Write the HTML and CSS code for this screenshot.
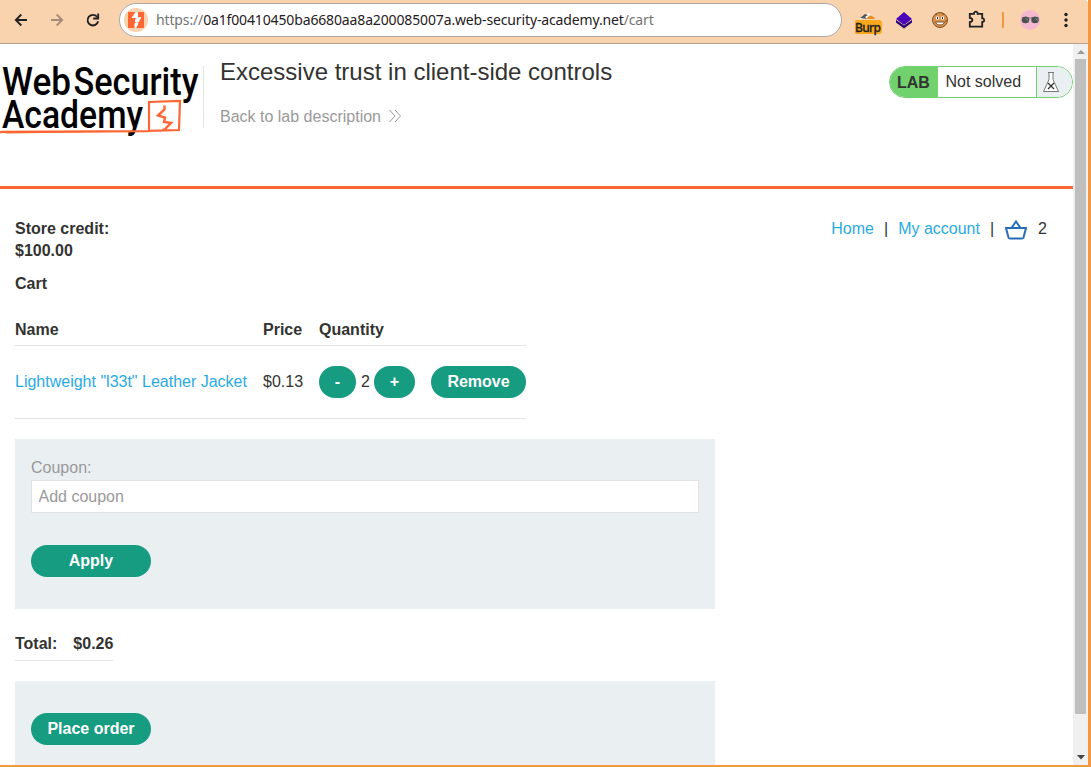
FILE: index.html
```
<!DOCTYPE html>
<html lang="en">
<head>
<meta charset="utf-8">
<title>Excessive trust in client-side controls</title>
<link rel="stylesheet" href="styles.css">
</head>
<body>
<div class="window">
  <header class="toolbar">
    <svg class="nav-icons" width="120" height="43" viewBox="0 0 120 43" fill="none" stroke="#1f2023" stroke-width="1.8">
      <path d="M27 20H16M21.3 14.5L15.8 20l5.500 5.500"/>
      <path d="M51 20h11M56.700 14.500l5.500 5.500-5.500 5.500" stroke="#a38b79"/>
      <path d="M97.300 17.200A5.300 5.300 0 1 0 98.100 21.200"/>
      <path d="M98.200 13.500v5h-5"/>
    </svg>
    <div class="address">
      <svg width="24" height="24" viewBox="0 0 24 24"><circle cx="12" cy="12" r="12" fill="#f9d2ae"/><path fill="#ff6633" d="M4 4h16v16H4z"/><path fill="#fff" d="M11.500 4H14v5.200h3.500l-3 5h-1.200l1.200 1.500-2.500 4.300h-1.500v-4.500l2-1.500H11v-2.500l1.500-1.500H7.500z"/></svg>
      <span class="url">https://<b>0a1f00410450ba6680aa8a200085007a.web-security-academy.net</b>/cart</span>
    </div>
    <div class="extensions">
      <svg width="233" height="43" viewBox="0 0 233 43">
        <path d="M5 18c2-2 3-3 5-3l4-2 2 2 3 2 1 2H5z" fill="#fff"/><path d="M5 18l5-4 3 1-3 2 2 2z" fill="#555"/><path d="M12 18l3-3 4 2 1 2h-9z" fill="#ee8d24"/>
        <rect x="-1" y="20" width="28" height="14" rx="3" fill="#fda81e"/>
        <text x="0" y="32" class="badge" textLength="26">Burp</text>
        <path fill="#26006f" d="M41 20l8 5.500 8-5.500v2.500L49 28.500l-8-6z"/><path fill="#4b05b8" d="M49 12l8 7-8 6-8-6z"/>
        <circle cx="85" cy="20" r="7.500" fill="#d9934b" stroke="#81502d"/><g fill="#874a20"><circle cx="81" cy="14.500" r=".8"/><circle cx="88" cy="14" r=".8"/><circle cx="91" cy="21" r=".8"/></g><g fill="#fff"><circle cx="82.500" cy="18" r="1.700"/><circle cx="87.500" cy="18" r="1.700"/><path d="M80.500 22h9c-1 4-8 4-9 0z" stroke="#633315" stroke-width=".8"/></g><path d="M82.500 17v2M87.500 17v2" stroke="#222"/>
        <path d="M114.800 13.800h4.200v-1a2 2 0 0 1 3.600 0v1h4.600v4.600h.7a1.900 1.900 0 0 1 0 3.600h-.7v4.700h-12.400v-4.600c3.400-.3 3.400-3.900 0-4.200z" fill="none" stroke="#202124" stroke-width="1.800"/>
        <path d="M147 12h2v16h-2z" fill="#f49740"/>
        <circle cx="175" cy="20" r="10" fill="#f5b8ce"/><path d="M167 18q4-2 7 0h2q4-2 8 0" fill="none" stroke="#777"/><ellipse cx="170.500" cy="20" rx="3.800" ry="3.300" fill="#4b5150"/><ellipse cx="180" cy="20" rx="3.800" ry="3.300" fill="#4b5150"/><path d="M171 18.500l2 2M181 18.500l1.500 2" stroke="#9fa9a5"/>
        <g fill="#202124"><circle cx="211" cy="14.500" r="1.700"/><circle cx="211" cy="20" r="1.700"/><circle cx="211" cy="25.500" r="1.700"/></g>
      </svg>
    </div>
  </header>
  <div class="viewport">
    <main class="page">
      <section class="lab-header">
        <svg class="logo" width="204" height="96" viewBox="0 44 204 96">
          <g class="logo-text">
            <text x="2" y="95" textLength="69" lengthAdjust="spacingAndGlyphs">Web</text>
            <text x="73.500" y="95" textLength="125" lengthAdjust="spacingAndGlyphs">Security</text>
            <text x="2" y="127.500" textLength="141" lengthAdjust="spacingAndGlyphs">Academy</text>
          </g>
          <path d="M0 132.300l2-.4 146-.7M149 131V102l31-1-1 29-31 .8" fill="none" stroke="#ff6633" stroke-width="2.200"/>
          <path d="M0 132.500l60-.9 66 .1-118 1.900z" fill="#ff6633"/>
          <path d="M164.500 105.500v4l-6.500 6 7 2-1 4.500 7 .8-6.500 7h-2" fill="none" stroke="#ff6633" stroke-width="2.400"/>
          <path d="M203.500 66v62" stroke="#e3e3e3"/>
        </svg>
        <div class="titles">
          <h1>Excessive trust in client-side controls</h1>
          <a class="back">Back to lab description<svg width="12" height="14" viewBox="0 0 12 14" fill="none" stroke="#999"><path d="M.5 1l5.500 6-5.500 6M6 1l5.500 6L6 13"/></svg></a>
        </div>
        <div class="status"><strong>LAB</strong><span>Not solved</span><i><svg width="18" height="22" viewBox="0 0 18 22"><path d="M6 1.500h6M7 1.500v7L1.500 20.500h15L11 8.500v-7" fill="#fff" stroke="#777"/><path d="M6 12l6 6M12 12l-6 6" stroke="#333" stroke-width="1.300"/></svg></i></div>
      </section>
      <section class="content">
        <div class="topline">
          <div class="credit">Store credit:<br>$100.00</div>
          <nav><a>Home</a><span>|</span><a>My account</a><span>|</span><svg width="22" height="20" viewBox="0 0 22 20" fill="none" stroke="#286dba" stroke-width="2"><path d="M1 8h20l-2.500 9.500q-.3 1-1.500 1H5q-1.200 0-1.500-1zM6.500 8L11 1.500 15.500 8"/></svg><em>2</em></nav>
        </div>
        <h2>Cart</h2>
        <div class="cart">
          <div class="row head"><b>Name</b><b>Price</b><b>Quantity</b></div>
          <div class="row item"><a>Lightweight "l33t" Leather Jacket</a><span>$0.13</span><div class="qty"><button class="minus">-</button><span>2</span><button class="plus">+</button></div><button class="remove">Remove</button></div>
        </div>
        <form class="panel coupon">
          <label for="coupon">Coupon:</label>
          <input id="coupon" placeholder="Add coupon">
          <button type="button" class="wide">Apply</button>
        </form>
        <div class="total"><span>Total:</span><span>$0.26</span></div>
        <div class="panel order"><button class="wide">Place order</button></div>
      </section>
    </main>
    <div class="scrollbar"><svg width="15" height="15"><path d="M4 10l4-4 4 4z" fill="#999"/></svg><div class="thumb"></div><svg width="15" height="15"><path d="M4 5h8L8 9.500z" fill="#444"/></svg></div>
  </div>
</div>
</body>
</html>
```
FILE: styles.css
```
* { box-sizing: border-box; }
body { margin: 0; overflow: hidden; font: 16px/22px "Liberation Sans", Arial, sans-serif; color: #333332; }
svg { display: block; flex: none; }
.window { width: 1091px; height: 767px; display: flex; flex-direction: column; border-right: 3px solid #f49740; border-bottom: 2px solid #f49740; background: #fff; }
.toolbar { flex: none; height: 44px; display: flex; background: #f9d2ae; border-bottom: 1px solid #b9a18f; border-top-right-radius: 4px; }
.nav-icons { margin-right: -1px; }
.address { flex: none; width: 723px; height: 34px; margin-top: 3px; border: 1px solid #aaa9a9; border-radius: 17px; background: #fff; display: flex; align-items: center; padding-left: 4px; }
.url { margin-left: 8px; font: 14px/20px "Noto Sans", sans-serif; letter-spacing: -.14px; color: #747474; white-space: nowrap; }
.url b { font-weight: 400; color: #1f2023; }
.extensions { margin-left: 13px; }
.badge { font: 500 12px "Noto Sans", sans-serif; fill: #222; stroke: #222; stroke-width: .3px; }
.viewport { display: flex; flex: 1; min-height: 0; }
.page { width: 1073px; overflow: hidden; }
.scrollbar { width: 15px; background: #f0f0f0; display: flex; flex-direction: column; }
.thumb { height: 655px; width: 11px; margin: 0 2px; background: #bfbfbf; }
.scrollbar svg:last-child { margin-top: auto; }
.lab-header { height: 145px; display: flex; border-bottom: 3px solid #ff6633; }
.logo { overflow: visible; }
.logo-text { font: 500 38.500px Roboto, sans-serif; fill: #000; }
.titles { margin-left: 16px; flex: 1; }
h1 { margin: 14px 0 0; font-size: 24px; line-height: 28px; font-weight: 400; }
.back { display: flex; align-items: center; margin-top: 20px; color: #999; gap: 8px; }
.back svg { margin-top: -2px; }
.status { display: flex; width: 184px; height: 32px; margin-top: 22px; border: 1px solid #70d16d; border-radius: 16px; overflow: hidden; line-height: 30px; }
.status strong { width: 48px; padding-left: 7px; background: #70d16d; line-height: 32px; }
.status span { width: 98px; padding-left: 7.500px; }
.status i { flex: 1; padding: 4px 0 0 5px; border-left: 1px solid #70d16d; background: #eaeff2; }
.content { padding: 29px 15px 0; }
.topline { display: flex; justify-content: space-between; font-weight: 700; }
nav { display: flex; align-items: flex-start; margin-right: 11px; font-weight: 400; }
nav span { margin: 0 10px; }
nav svg { margin: 2px 0 0 1px; }
nav em { margin-left: 11px; font-style: normal; }
a { color: #29abe2; }
.titles .back { color: #999; }
h2 { font-size: 16px; line-height: 22px; margin: 11px 0 24px; }
.cart { width: 511px; }
.row { display: grid; grid-template-columns: 248px 56px 112px 95px; border-bottom: 1px solid #e3e3e3; align-items: center; }
.head { height: 27px; padding-bottom: 4px; }
.item { height: 73px; }
.qty { display: flex; align-items: center; }
.qty span { width: 9px; margin: 0 4px 0 5px; }
button { height: 32px; padding: 0; border: 0; border-radius: 16px; background: #169c80; color: #fff; font: 700 16px/32px "Liberation Sans", Arial, sans-serif; }
.minus { width: 37px; }
.plus { width: 41px; }
.remove { width: 95px; }
.wide { width: 120px; }
.panel { width: 700px; padding: 0 16px; background: #eaeff2; }
.coupon { height: 170px; margin-top: 20px; padding-top: 18px; display: flex; flex-direction: column; align-items: flex-start; }
label { color: #999; }
input { width: 668px; height: 33px; margin: 1px 0 32px; padding: 0 6.500px; border: 1px solid #e3e3e3; font: 16px "Liberation Sans", Arial, sans-serif; }
input::placeholder { color: #999; }
.total { display: inline-flex; gap: 16px; height: 29px; margin-top: 23px; border-bottom: 1px solid #e3e3e3; font-weight: 700; line-height: 24px; }
.order { height: 100px; margin-top: 20px; padding-top: 32px; }
```
